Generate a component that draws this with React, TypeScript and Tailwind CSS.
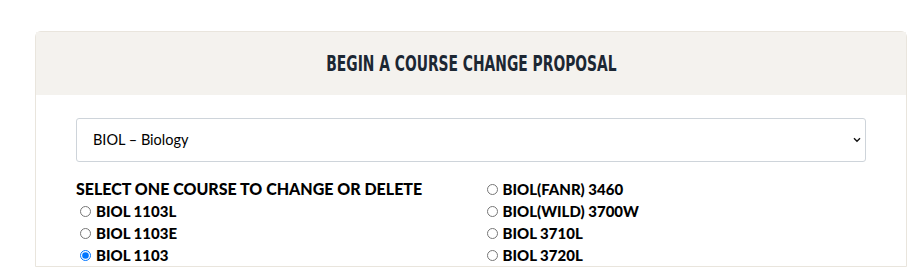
import { useState } from 'react';

const leftCourses = ['BIOL 1103L', 'BIOL 1103E', 'BIOL 1103'];
const rightCourses = ['BIOL(FANR) 3460', 'BIOL(WILD) 3700W', 'BIOL 3710L', 'BIOL 3720L'];

function CourseRadio({ code, checked, onPick }: { code: string; checked: boolean; onPick: () => void }) {
  return (
    <label className="flex h-[22px] items-center gap-[5px] text-[15px] font-black text-black">
      <input
        type="radio"
        name="course"
        checked={checked}
        onChange={onPick}
        className="ml-[4px] h-[11px] w-[11px] accent-[#0075ff]"
      />
      <span>{code}</span>
    </label>
  );
}

export default function App() {
  const [picked, setPicked] = useState('BIOL 1103');

  return (
    <div className="h-[268px] overflow-hidden bg-white pl-[35px] pr-[5px] pt-[31px] font-['Lato','Noto_Sans',sans-serif]">
      <div className="rounded-t-[6px] border border-[#e9e5dd]">
        {/* header */}
        <div className="flex h-[63px] items-center justify-center bg-[#f4f2ee]">
          <h2 className="inline-block scale-x-[0.7] whitespace-nowrap font-['DejaVu_Sans_Condensed',sans-serif] text-[22px] font-bold uppercase text-[#1c2733]">
            Begin a Course Change Proposal
          </h2>
        </div>

        <div className="px-[40px] pt-[23px]">
          <div className="relative">
            <select
              defaultValue="BIOL"
              className="h-[44px] w-full appearance-none rounded-[3px] border border-[#ced4da] bg-white pl-[16px] text-[14.5px] text-black outline-none"
            >
              <option value="BIOL">BIOL – Biology</option>
            </select>
            <svg
              className="pointer-events-none absolute right-[5px] top-[19px]"
              width="8"
              height="6"
              viewBox="0 0 8 6"
              fill="none"
            >
              <path d="M1 1.2 4 4.2 7 1.2" stroke="#111" strokeWidth="1.4" />
            </svg>
          </div>

          <div className="mt-[16px] grid grid-cols-2 gap-x-[23px]">
            <div>
              <h3 className="h-[22px] text-[16px] font-black uppercase leading-[22px] text-black">
                Select one course to change or delete
              </h3>
              {leftCourses.map((c) => (
                <CourseRadio key={c} code={c} checked={picked === c} onPick={() => setPicked(c)} />
              ))}
            </div>
            <div>
              {rightCourses.map((c) => (
                <CourseRadio key={c} code={c} checked={picked === c} onPick={() => setPicked(c)} />
              ))}
            </div>
          </div>
        </div>
      </div>
    </div>
  );
}
